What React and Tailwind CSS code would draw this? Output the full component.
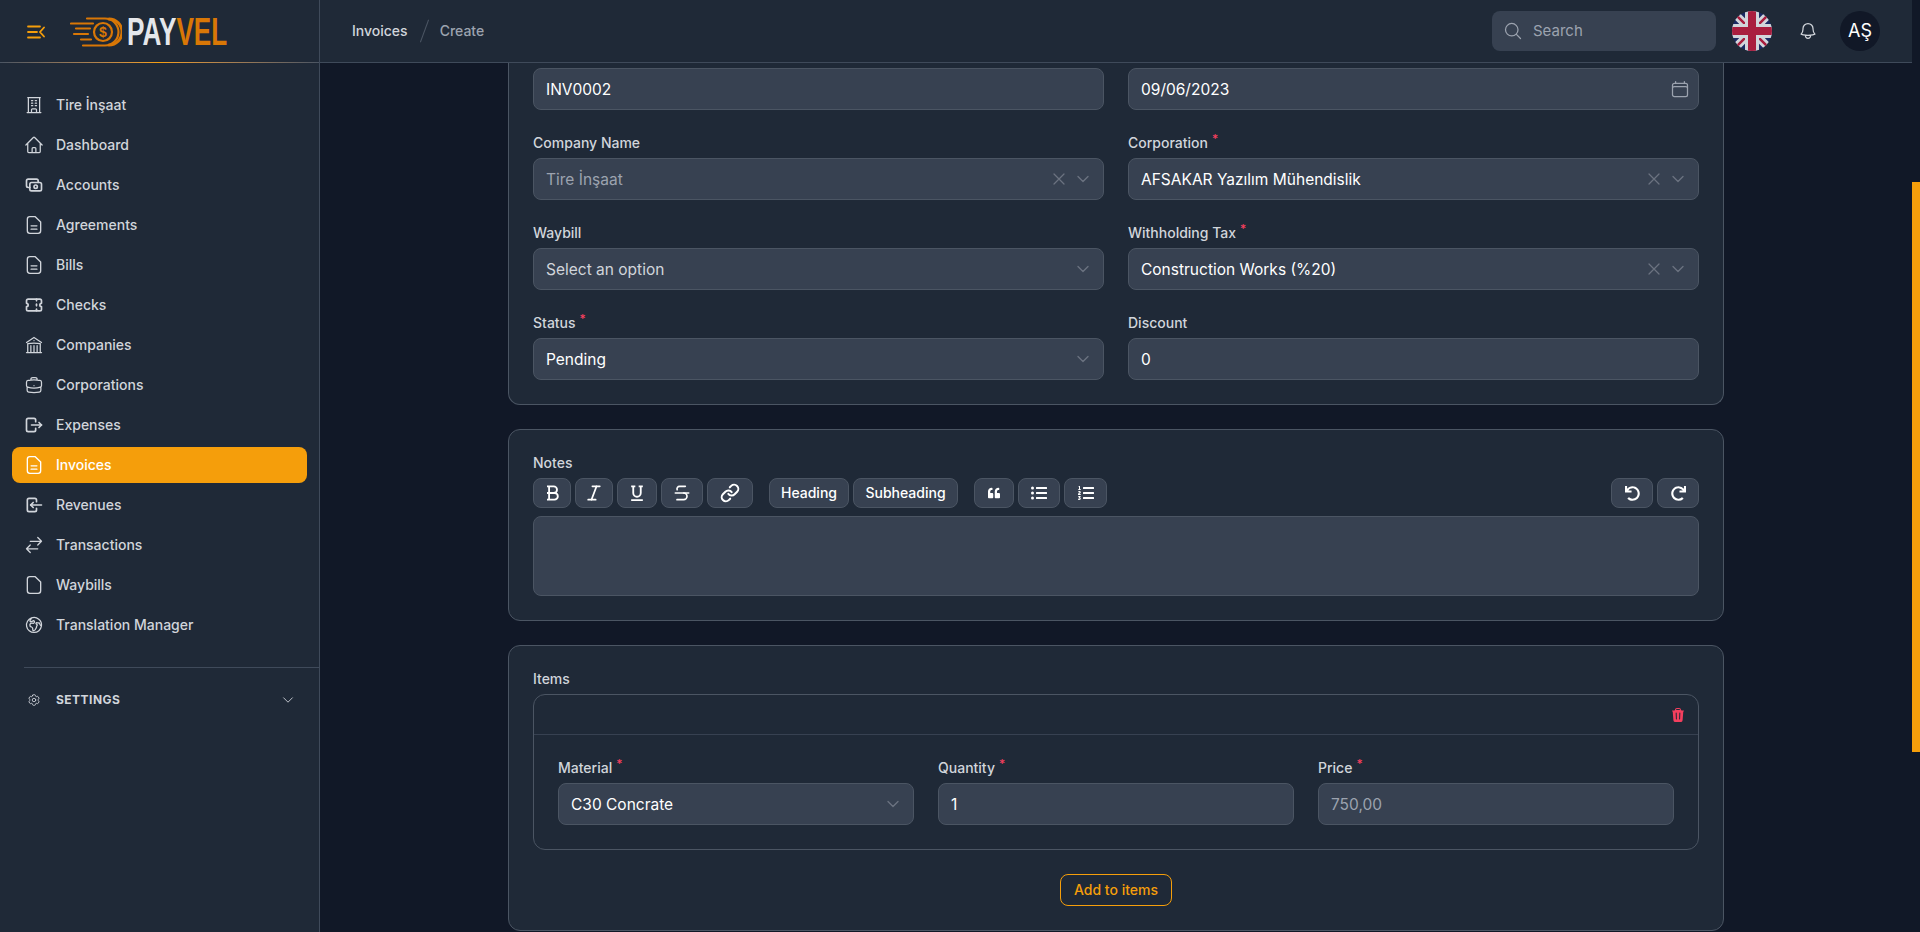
import React from 'react';
import {
    HiOutlineBuildingOffice,
    HiOutlineHome,
    HiOutlineBuildingLibrary,
    HiOutlineBriefcase,
    HiOutlineArrowsRightLeft,
    HiOutlineGlobeEuropeAfrica,
    HiOutlineCog6Tooth,
    HiOutlineBell,
    HiOutlineMagnifyingGlass,
    HiOutlineCalendar,
    HiOutlineXMark,
    HiOutlineChevronDown,
    HiTrash
} from 'react-icons/hi2';
import {TbCash, TbTicket, TbLogout, TbLogin} from 'react-icons/tb';
import {Italic, Strikethrough, Link} from 'lucide-react';
import {FaQuoteLeft, FaListUl, FaListOl, FaUndo, FaRedo} from 'react-icons/fa';

// dokument z zaokrąglonym rogiem, z liniami lub bez
const DocLines = ({className}) => (
    <svg viewBox="0 0 24 24" fill="none" stroke="currentColor" strokeWidth="1.6" strokeLinecap="round" strokeLinejoin="round" className={className}>
        <path d="M7 2h6.5L20 8.5V19a3 3 0 0 1-3 3H7a3 3 0 0 1-3-3V5a3 3 0 0 1 3-3z"/>
        <path d="M8.5 13h7M8.5 17h7"/>
    </svg>
);

const DocPlain = ({className}) => (
    <svg viewBox="0 0 24 24" fill="none" stroke="currentColor" strokeWidth="1.6" strokeLinecap="round" strokeLinejoin="round" className={className}>
        <path d="M7 2h6.5L20 8.5V19a3 3 0 0 1-3 3H7a3 3 0 0 1-3-3V5a3 3 0 0 1 3-3z"/>
    </svg>
);

const navItems = [
    {label: 'Tire İnşaat', icon: HiOutlineBuildingOffice},
    {label: 'Dashboard', icon: HiOutlineHome},
    {label: 'Accounts', icon: TbCash},
    {label: 'Agreements', icon: DocLines},
    {label: 'Bills', icon: DocLines},
    {label: 'Checks', icon: TbTicket},
    {label: 'Companies', icon: HiOutlineBuildingLibrary},
    {label: 'Corporations', icon: HiOutlineBriefcase},
    {label: 'Expenses', icon: TbLogout},
    {label: 'Invoices', icon: DocLines, active: true},
    {label: 'Revenues', icon: TbLogin},
    {label: 'Transactions', icon: HiOutlineArrowsRightLeft},
    {label: 'Waybills', icon: DocPlain},
    {label: 'Translation Manager', icon: HiOutlineGlobeEuropeAfrica}
];

const LogoMark = () => (
    <svg width="52" height="32" viewBox="0 0 52 32" className="shrink-0">
        <g fill="none" stroke="#d97706" strokeLinecap="round">
            <path d="M17 2.5h18a13.5 13.5 0 0 1 0 27H13" strokeWidth="2.2"/>
            <path d="M39 3a13 13 0 0 1 0 26" strokeWidth="3"/>
            <circle cx="33" cy="16" r="9" strokeWidth="2.2"/>
            <path d="M1 7.5h22M6 12.5h14M4 18h14M11 23.5h10" strokeWidth="2.2"/>
        </g>
        <text x="33" y="21" fontSize="14" fontWeight="700" fill="#d97706" textAnchor="middle" fontFamily="Liberation Sans, sans-serif">$</text>
    </svg>
);

const UkFlag = () => (
    <svg viewBox="0 0 40 40" className="h-10 w-10 rounded-full">
        <rect width="40" height="40" fill="#1b2a63"/>
        <path d="M0 0L40 40M40 0L0 40" stroke="#d1d5db" strokeWidth="8"/>
        <path d="M0 0L40 40M40 0L0 40" stroke="#a91e3f" strokeWidth="2.5"/>
        <path d="M20 0V40M0 20H40" stroke="#d1d5db" strokeWidth="14"/>
        <path d="M20 0V40M0 20H40" stroke="#a91e3f" strokeWidth="8"/>
    </svg>
);

const BoldIcon = () => (
    <svg viewBox="0 0 24 24" className="h-5 w-5" fill="none" stroke="currentColor" strokeWidth="2.2">
        <path d="M6 4h8a4 4 0 0 1 0 8H6M8.5 4v16M6 12h9a4 4 0 0 1 0 8H6"/>
    </svg>
);

const UnderlineIcon = () => (
    <svg viewBox="0 0 24 24" className="h-5 w-5" fill="none" stroke="currentColor" strokeWidth="2.2">
        <path d="M5 4h5M14 4h5M7.5 4v8a4.5 4.5 0 0 0 9 0V4M5 20.5h14"/>
    </svg>
);

const Label = ({children, required}) => (
    <div className="mb-1 flex h-5 items-center pb-0.5 text-sm font-medium leading-5 text-[#d1d5db]">
        {children}
        {required && <span className="ml-1 -mt-2 text-xs font-medium leading-3 text-[#f43f5e]">*</span>}
    </div>
);

// pole formularza: tekst albo select z ikonami po prawej
const Field = ({label, required, value, tone = 'text-white', clearable, select, calendar}) => (
    <div>
        {label && <Label required={required}>{label}</Label>}
        <div className="flex h-[42px] items-center rounded-lg border border-[#4b5563] bg-[#374151] px-3">
            <span className={`flex-1 truncate pt-px text-[15.5px] font-normal ${tone}`}>{value}</span>
            {clearable && <HiOutlineXMark className="mr-[6px] h-5 w-5 text-[#6b7280]"/>}
            {select && <HiOutlineChevronDown className="h-4 w-4 text-[#6b7280]" strokeWidth={2}/>}
            {calendar && <HiOutlineCalendar className="-mr-1 h-5 w-5 text-[#9ca3af]"/>}
        </div>
    </div>
);

const ToolBtn = ({children, className = 'w-[38px]'}) => (
    <button className={`flex h-[30px] items-center justify-center rounded-lg border border-[#4b5563] bg-[#374151] text-sm font-medium text-white ${className}`}>
        {children}
    </button>
);

const Sidebar = () => (
    <aside className="flex w-[320px] shrink-0 flex-col border-r border-[#3f4a5a] bg-[#1f2937]">
        <div className="relative flex h-[63px] shrink-0 items-center pl-[27px]">
            <svg width="18" height="14" viewBox="0 0 18 14" fill="none" stroke="#f59e0b" strokeWidth="1.8" strokeLinecap="round" className="mr-[25px]">
                <path d="M1 1.5h12M1 7h9M1 12.5h12M17 2.5L13 7l4 4.5"/>
            </svg>
            <LogoMark/>
            <div className="ml-[5px] origin-left scale-x-[0.67] whitespace-nowrap font-['Liberation_Sans',sans-serif] text-[39px] font-bold leading-8">
                <span className="text-[#e5e7eb]">PAY</span><span className="text-[#d97706]">VEL</span>
            </div>
            <div className="absolute inset-x-0 bottom-0 h-px bg-gradient-to-r from-[#4b5563] via-[#f59e0b] to-[#4b5563]"/>
        </div>
        <nav className="flex flex-col gap-1 px-3 pt-6">
            {navItems.map(({label, icon: Icon, active}) => (
                <a key={label} className={`flex h-9 items-center gap-3 rounded-lg px-3 text-sm font-medium ${active ? 'bg-[#f59e0b] text-white' : 'text-[#d1d5db]'}`}>
                    <Icon className="h-5 w-5 shrink-0"/>
                    <span>{label}</span>
                </a>
            ))}
        </nav>
        <div className="ml-6 mt-6 border-t border-[#3f4a5a]"/>
        <div className="mt-[22px] flex h-5 items-center pl-[27px] pr-6 text-[#d1d5db]">
            <HiOutlineCog6Tooth className="h-[14px] w-[14px]"/>
            <span className="ml-[15px] flex-1 text-xs font-bold uppercase tracking-[0.04em]">Settings</span>
            <HiOutlineChevronDown className="h-[14px] w-[14px]"/>
        </div>
    </aside>
);

const Topbar = () => (
    <header className="flex h-[63px] shrink-0 items-center border-b border-[#3f4a5a] bg-[#1f2937] pl-8 pr-8">
        <span className="text-sm font-medium text-[#d1d5db]">Invoices</span>
        <span className="ml-4 mr-[15px] h-6 w-px rotate-[20deg] bg-[#4b5563]"/>
        <span className="text-sm font-medium text-[#9ca3af]">Create</span>
        <div className="ml-auto flex h-10 w-[224px] items-center rounded-lg bg-[#374151] pl-[11px]">
            <HiOutlineMagnifyingGlass className="h-5 w-5 text-[#9ca3af]"/>
            <span className="ml-[10px] text-[15px] text-[#9ca3af]">Search</span>
        </div>
        <div className="ml-4"><UkFlag/></div>
        <HiOutlineBell className="ml-[26px] h-5 w-5 text-[#d1d5db]"/>
        <div className="ml-[22px] flex h-10 w-10 items-center justify-center rounded-full bg-[#111827] text-lg text-white">AŞ</div>
    </header>
);

const MainForm = () => (
    <div className="mx-auto flex w-[1216px] flex-col gap-6">
        <section className="rounded-b-xl border border-t-0 border-[#4b5563] bg-[#1f2937] px-6 pb-6 pt-[5px]">
            <div className="grid grid-cols-2 gap-6">
                <Field value="INV0002"/>
                <Field value="09/06/2023" calendar/>
                <Field label="Company Name" value="Tire İnşaat" tone="text-[#9ca3af]" clearable select/>
                <Field label="Corporation" required value="AFSAKAR Yazılım Mühendislik" clearable select/>
                <Field label="Waybill" value="Select an option" tone="text-[#d1d5db]" select/>
                <Field label="Withholding Tax" required value="Construction Works (%20)" clearable select/>
                <Field label="Status" required value="Pending" select/>
                <Field label="Discount" value="0"/>
            </div>
        </section>

        <section className="rounded-xl border border-[#4b5563] bg-[#1f2937] p-6">
            <Label>Notes</Label>
            <div className="flex gap-1">
                <ToolBtn><BoldIcon/></ToolBtn>
                <ToolBtn><Italic className="h-5 w-5"/></ToolBtn>
                <ToolBtn className="w-10"><UnderlineIcon/></ToolBtn>
                <ToolBtn className="w-[42px]"><Strikethrough className="h-5 w-5"/></ToolBtn>
                <ToolBtn className="mr-3 w-[46px]"><Link className="h-5 w-5" strokeWidth={2.4}/></ToolBtn>
                <ToolBtn className="w-20">Heading</ToolBtn>
                <ToolBtn className="mr-[12px] w-[105px]">Subheading</ToolBtn>
                <ToolBtn className="w-10"><FaQuoteLeft className="h-3 w-3"/></ToolBtn>
                <ToolBtn className="w-[42px]"><FaListUl className="h-4 w-4"/></ToolBtn>
                <ToolBtn className="w-[43px]"><FaListOl className="h-4 w-4"/></ToolBtn>
                <ToolBtn className="ml-auto w-[42px]"><FaUndo className="h-[15px] w-[15px]"/></ToolBtn>
                <ToolBtn className="w-[42px]"><FaRedo className="h-[15px] w-[15px]"/></ToolBtn>
            </div>
            <div className="mt-2 h-20 rounded-lg border border-[#4b5563] bg-[#374151]"/>
        </section>

        <section className="rounded-xl border border-[#4b5563] bg-[#1f2937] p-6">
            <Label>Items</Label>
            <div className="rounded-xl border border-[#4b5563]">
                <div className="flex h-10 items-center justify-end border-b border-[#374151] pr-3">
                    <HiTrash className="h-4 w-4 text-[#f43f5e]"/>
                </div>
                <div className="grid grid-cols-3 gap-6 p-6">
                    <Field label="Material" required value="C30 Concrate" select/>
                    <Field label="Quantity" required value="1"/>
                    <Field label="Price" required value="750,00" tone="text-[#9ca3af]"/>
                </div>
            </div>
            <div className="mt-6 flex justify-center">
                <button className="flex h-8 w-[112px] items-center justify-center rounded-lg border border-[#f59e0b] text-sm font-medium text-[#f59e0b]">
                    Add to items
                </button>
            </div>
        </section>
    </div>
);

const App = () => (
    <div className="flex h-[932px] overflow-hidden bg-[#111827] font-['Inter',sans-serif]">
        <Sidebar/>
        <div className="flex min-w-0 flex-1 flex-col">
            <Topbar/>
            <main className="min-h-0 flex-1 overflow-hidden">
                <MainForm/>
            </main>
        </div>
        <div className="w-2 shrink-0">
            <div className="mt-[182px] h-[570px] bg-[#f59e0b]"/>
        </div>
    </div>
);

export default App;
